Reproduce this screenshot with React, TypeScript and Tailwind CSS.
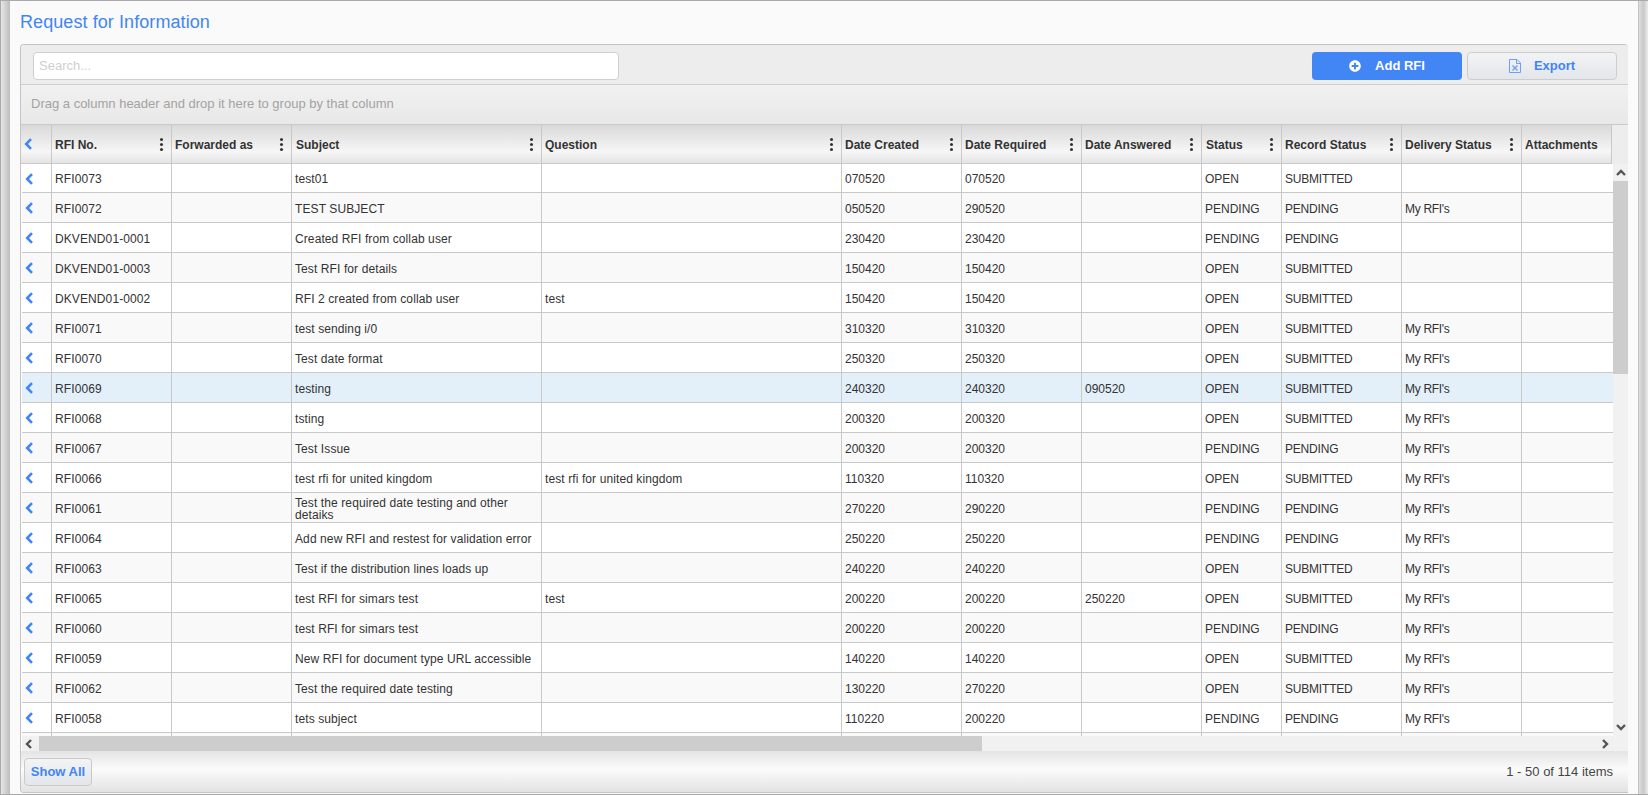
import { FaPlusCircle } from "react-icons/fa";

type Rfi = {
  no: string;
  subject: string;
  question?: string;
  created: string;
  required: string;
  answered?: string;
  status: string;
  record: string;
  delivery?: string;
};

const rows: Rfi[] = [
  { no: "RFI0073", subject: "test01", created: "070520", required: "070520", status: "OPEN", record: "SUBMITTED" },
  { no: "RFI0072", subject: "TEST SUBJECT", created: "050520", required: "290520", status: "PENDING", record: "PENDING", delivery: "My RFI's" },
  { no: "DKVEND01-0001", subject: "Created RFI from collab user", created: "230420", required: "230420", status: "PENDING", record: "PENDING" },
  { no: "DKVEND01-0003", subject: "Test RFI for details", created: "150420", required: "150420", status: "OPEN", record: "SUBMITTED" },
  { no: "DKVEND01-0002", subject: "RFI 2 created from collab user", question: "test", created: "150420", required: "150420", status: "OPEN", record: "SUBMITTED" },
  { no: "RFI0071", subject: "test sending i/0", created: "310320", required: "310320", status: "OPEN", record: "SUBMITTED", delivery: "My RFI's" },
  { no: "RFI0070", subject: "Test date format", created: "250320", required: "250320", status: "OPEN", record: "SUBMITTED", delivery: "My RFI's" },
  { no: "RFI0069", subject: "testing", created: "240320", required: "240320", answered: "090520", status: "OPEN", record: "SUBMITTED", delivery: "My RFI's" },
  { no: "RFI0068", subject: "tsting", created: "200320", required: "200320", status: "OPEN", record: "SUBMITTED", delivery: "My RFI's" },
  { no: "RFI0067", subject: "Test Issue", created: "200320", required: "200320", status: "PENDING", record: "PENDING", delivery: "My RFI's" },
  { no: "RFI0066", subject: "test rfi for united kingdom", question: "test rfi for united kingdom", created: "110320", required: "110320", status: "OPEN", record: "SUBMITTED", delivery: "My RFI's" },
  { no: "RFI0061", subject: "Test the required date testing and other detaiks", created: "270220", required: "290220", status: "PENDING", record: "PENDING", delivery: "My RFI's" },
  { no: "RFI0064", subject: "Add new RFI and restest for validation error", created: "250220", required: "250220", status: "PENDING", record: "PENDING", delivery: "My RFI's" },
  { no: "RFI0063", subject: "Test if the distribution lines loads up", created: "240220", required: "240220", status: "OPEN", record: "SUBMITTED", delivery: "My RFI's" },
  { no: "RFI0065", subject: "test RFI for simars test", question: "test", created: "200220", required: "200220", answered: "250220", status: "OPEN", record: "SUBMITTED", delivery: "My RFI's" },
  { no: "RFI0060", subject: "test RFI for simars test", created: "200220", required: "200220", status: "PENDING", record: "PENDING", delivery: "My RFI's" },
  { no: "RFI0059", subject: "New RFI for document type URL accessible", created: "140220", required: "140220", status: "OPEN", record: "SUBMITTED", delivery: "My RFI's" },
  { no: "RFI0062", subject: "Test the required date testing", created: "130220", required: "270220", status: "OPEN", record: "SUBMITTED", delivery: "My RFI's" },
  { no: "RFI0058", subject: "tets subject", created: "110220", required: "200220", status: "PENDING", record: "PENDING", delivery: "My RFI's" },
];

const columns = [
  { title: "RFI No.", width: "w-[120px] pl-[3px]" },
  { title: "Forwarded as", width: "w-[120px] pl-[3px]" },
  { title: "Subject", width: "w-[250px] pl-1" },
  { title: "Question", width: "w-[300px] pl-[3px]" },
  { title: "Date Created", width: "w-[120px] pl-[3px]" },
  { title: "Date Required", width: "w-[120px] pl-[3px]" },
  { title: "Date Answered", width: "w-[120px] pl-[3px]" },
  { title: "Status", width: "w-[80px] pl-1" },
  { title: "Record Status", width: "w-[120px] pl-[3px]" },
  { title: "Delivery Status", width: "w-[120px] pl-[3px]" },
];

function ChevronLeft() {
  return (
    <svg width="9" height="12" viewBox="0 0 9 12" className="shrink-0">
      <path d="M7 1.2 2.2 6 7 10.8" fill="none" stroke="#4285f4" strokeWidth="2.6" />
    </svg>
  );
}

function Kebab() {
  return (
    <div className="flex flex-col gap-[2px]">
      <span className="size-[3px] rounded-full bg-[#333]" />
      <span className="size-[3px] rounded-full bg-[#333]" />
      <span className="size-[3px] rounded-full bg-[#333]" />
    </div>
  );
}

function Arrow({ d }: { d: string }) {
  return (
    <svg width="10" height="10" viewBox="0 0 10 10">
      <path d={d} fill="none" stroke="#555" strokeWidth="2.4" />
    </svg>
  );
}

function ExcelFile() {
  return (
    <svg width="12" height="14" viewBox="0 0 12 14" fill="none" stroke="#6d9ff5" className="shrink-0">
      <path d="M.5.5h7.5l3.5 3.5v9.5H.5z" />
      <path d="M7.5.5v4h4" />
      <path d="m3.5 6.5 5 5m0-5-5 5" strokeWidth="1.4" />
    </svg>
  );
}

function Cell({ width, children }: { width: string; children?: string }) {
  return (
    <div className={`${width} flex shrink-0 items-center overflow-hidden border-r border-[#c9c9c9] pl-[3px] pr-1 leading-[12px]`}>
      {children}
    </div>
  );
}

function Row({ row, index }: { row?: Rfi; index: number }) {
  const bg = index === 7 ? "bg-[#e3f0fa]" : index % 2 === 0 ? "bg-white" : "bg-[#f9f9f9]";
  // first row is a pixel shorter, its text sits a bit higher
  const pad = index === 0 ? "pt-px" : "pt-[3px]";
  return (
    <div className={`flex shrink-0 border-b border-[#c9c9c9] ${index === 0 ? "h-[29px]" : "h-[30px]"} ${bg}`}>
      <div className="flex w-[30px] shrink-0 items-center border-r border-[#c9c9c9] pl-[3px] pt-px">
        {row && <ChevronLeft />}
      </div>
      <Cell width={`w-[120px] tracking-[0.1px] ${pad}`}>{row?.no}</Cell>
      <Cell width="w-[120px]" />
      <Cell width={`w-[250px] tracking-[0.1px] ${pad}`}>{row?.subject}</Cell>
      <Cell width={`w-[300px] tracking-[0.1px] ${pad}`}>{row?.question}</Cell>
      <Cell width={`w-[120px] ${pad}`}>{row?.created}</Cell>
      <Cell width={`w-[120px] ${pad}`}>{row?.required}</Cell>
      <Cell width={`w-[120px] ${pad}`}>{row?.answered}</Cell>
      <Cell width={`w-[80px] ${pad}`}>{row?.status}</Cell>
      <Cell width={`w-[120px] tracking-[-0.2px] ${pad}`}>{row?.record}</Cell>
      <Cell width={`w-[120px] tracking-[-0.3px] ${pad}`}>{row?.delivery}</Cell>
      <div className="flex-1" />
    </div>
  );
}

export default function App() {
  return (
    <div className="flex h-[795px] w-[1648px] overflow-hidden border-y border-[#a9a9a9] bg-[#fafafa] font-['Liberation_Sans',sans-serif] text-xs text-[#333]">
      <div className="w-[10px] shrink-0 border-l border-[#a9a9a9] bg-[linear-gradient(to_right,#e6e6e6,#bdbdbd)]" />

      <main className="flex w-[1628px] shrink-0 flex-col pl-[10px]">
        <h1 className="flex h-[43px] shrink-0 items-center pb-[2px] text-lg leading-none tracking-[0.08px] text-[#4285f4]">
          Request for Information
        </h1>

        <section className="flex h-[749px] w-[1608px] flex-col overflow-hidden rounded-t-[4px] rounded-bl-[4px] border-y border-l border-[#c4c4c4] bg-white">
          <div className="flex h-10 shrink-0 items-start justify-between border-b border-[#cfcfcf] bg-[#eeeded] pl-3 pr-[11px] pt-[7px]">
            <div className="flex h-7 w-[586px] items-center rounded border border-[#cfcfcf] bg-white pl-[5px] text-[13px] text-[#cfcfcf]">
              Search...
            </div>
            <div className="flex gap-[5px]">
              <button className="flex h-7 w-[150px] items-center justify-center gap-[14px] rounded bg-[#4285f4] text-[13px] font-bold text-white">
                <FaPlusCircle className="size-3" />
                Add RFI
              </button>
              <button className="flex h-7 w-[150px] items-center justify-center gap-[13px] rounded border border-[#cdcdcd] bg-[linear-gradient(#f2f3f5,#e3e6ea)] text-[13px] font-bold text-[#4285f4]">
                <ExcelFile />
                Export
              </button>
            </div>
          </div>

          <div className="flex h-10 shrink-0 items-center border-b border-[#c9c9c9] bg-[linear-gradient(#f2f1f1,#e9e8e8)] pb-px pl-[10px] text-[13px] text-[#a3a3a3]">
            Drag a column header and drop it here to group by that column
          </div>

          <div className="flex h-[39px] shrink-0 bg-[#eeeded]">
            <div className="flex w-[31px] shrink-0 items-center border-r border-b border-[#c9c9c9] bg-[linear-gradient(#d9d9d9,#f6f6f6_70%,#e4e4e4)] pl-[3px]">
              <ChevronLeft />
            </div>
            {columns.map((col) => (
              <div
                key={col.title}
                className={`${col.width} flex shrink-0 items-center justify-between border-r border-b border-[#c9c9c9] bg-[linear-gradient(#d9d9d9,#f6f6f6_70%,#e4e4e4)] pr-2 font-bold`}
              >
                <span className="pt-px">{col.title}</span>
                <Kebab />
              </div>
            ))}
            <div className="flex w-[90px] shrink-0 items-center border-r border-b border-[#c9c9c9] bg-[linear-gradient(#d9d9d9,#f6f6f6_70%,#e4e4e4)] pl-[3px] font-bold">
              <span className="pt-px">Attachments</span>
            </div>
          </div>

          <div className="flex h-[587px] shrink-0">
            <div className="flex w-[1592px] shrink-0 flex-col">
              <div className="flex h-[572px] shrink-0 flex-col overflow-hidden pl-px">
                {rows.map((row, i) => (
                  <Row key={row.no} row={row} index={i} />
                ))}
                <Row index={19} />
              </div>
              <div className="ml-px flex h-[15px] shrink-0 bg-[#f1f1f1]">
                <div className="flex w-[17px] items-center justify-start pl-[2px]">
                  <Arrow d="M7 1 3 5l4 4" />
                </div>
                <div className="w-[943px] bg-[#cdcdcd]" />
                <div className="flex flex-1 items-center justify-end pr-[3px]">
                  <Arrow d="m3 1 4 4-4 4" />
                </div>
              </div>
            </div>
            <div className="flex flex-1 flex-col bg-[#f1f1f1]">
              <div className="flex h-[17px] items-center justify-center">
                <Arrow d="m1 7 4-4 4 4" />
              </div>
              <div className="h-[193px] bg-[#cdcdcd]" />
              <div className="flex flex-1 items-end justify-center pb-[19px]">
                <Arrow d="m1 3 4 4 4-4" />
              </div>
            </div>
          </div>

          <footer className="flex flex-1 items-center justify-between bg-[linear-gradient(#e4e4e4,#fbfbfb_45%,#e2e2e2)] pl-[3px] pr-[15px]">
            <button className="h-7 w-[68px] rounded border border-[#c9c9c9] bg-[linear-gradient(#f2f3f5,#e3e6ea)] text-[13px] font-bold text-[#4285f4]">
              Show All
            </button>
            <span className="text-[13px] text-[#444]">1 - 50 of 114 items</span>
          </footer>
        </section>
      </main>

      <div className="w-[10px] shrink-0 border-l border-[#c4c4c4] bg-[linear-gradient(to_right,#dddddd,#c9c9c9_50%,#ececec)]" />
    </div>
  );
}
